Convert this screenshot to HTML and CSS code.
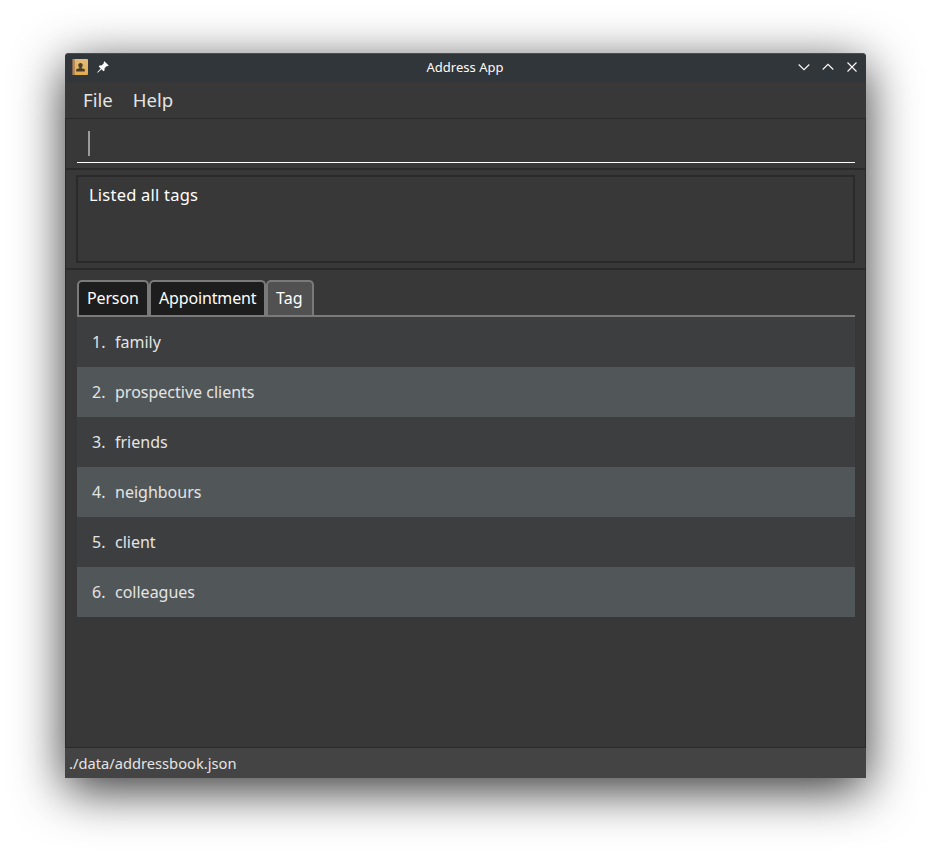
FILE: index.html
```html
<!DOCTYPE html>
<html lang="en">
<head>
<meta charset="utf-8">
<title>Address App</title>
<link rel="stylesheet" href="styles.css">
</head>
<body>
<div class="window">
  <header class="titlebar">
    <div class="title-left">
      <svg class="app-icon" width="18" height="18" viewBox="0 0 18 18">
        <defs><linearGradient id="cover" x1="0" y1="0" x2="0" y2="1"><stop offset="0" stop-color="#e2bd7c"/><stop offset="1" stop-color="#e2ab4b"/></linearGradient></defs>
        <rect x="1" y="1" width="16" height="16" rx="1" fill="url(#cover)"/>
        <rect x="1" y="1" width="1.5" height="16" fill="#81624b"/>
        <rect x="2.5" y="1" width="1.5" height="16" fill="#b48a56"/>
        <path d="M9.500 5c1.500 0 2.200 1 2.200 2.200 0 1-.5 1.600-1 2.100v1l3.100.9v2.300H5.200v-2.300l3.100-.9v-1c-.5-.5-1-1.100-1-2.100C7.300 6 8 5 9.500 5z" fill="#4b3d2c"/>
      </svg>
      <svg class="pin" width="12" height="12" viewBox="0 0 12 12">
        <path d="M7.400.3 11.700 4.500 10.700 5.300 9.800 5 7.600 7.200 7.500 9.400 6.500 10.200 4.500 8.200.7 11.700.2 11.300 3.700 7.400 1.700 5.400 2.600 4.400 4.800 4.300 7 2.100 6.600 1.200z" fill="#fcfcfc"/>
      </svg>
    </div>
    <h1 class="title">Address App</h1>
    <div class="controls">
      <svg width="12" height="12" viewBox="0 0 12 12"><path d="M.7 3.500 6 8.700l5.300-5.200"/></svg>
      <svg width="12" height="12" viewBox="0 0 12 12"><path d="M.7 8.500 6 3.300l5.300 5.200"/></svg>
      <svg width="12" height="12" viewBox="0 0 12 12"><path d="m1.500 1.500 9 9m0-9-9 9"/></svg>
    </div>
  </header>
  <nav class="menubar"><span>File</span><span>Help</span></nav>
  <main class="content">
    <section class="command"><div class="field"><span class="caret"></span></div></section>
    <section class="result"><div class="display">Listed all tags</div></section>
    <section class="panel">
      <div class="tabs">
        <div class="tab person">Person</div>
        <div class="tab appointment">Appointment</div>
        <div class="tab tag selected">Tag</div>
      </div>
      <div class="list">
        <div class="row"><span class="num">1.</span><span>family</span></div>
        <div class="row"><span class="num">2.</span><span>prospective clients</span></div>
        <div class="row"><span class="num">3.</span><span>friends</span></div>
        <div class="row"><span class="num">4.</span><span>neighbours</span></div>
        <div class="row"><span class="num">5.</span><span>client</span></div>
        <div class="row"><span class="num">6.</span><span>colleagues</span></div>
      </div>
    </section>
  </main>
  <footer class="status">./data/addressbook.json</footer>
</div>
</body>
</html>
```
FILE: styles.css
```css
* { box-sizing: border-box; }
body {
  margin: 0;
  height: 855px;
  padding: 53px 65px 77px;
  overflow: hidden;
  background: #fff;
  font-family: "Noto Sans", sans-serif;
  color: #e4e4e4;
}
.window {
  width: 801px;
  height: 725px;
  display: flex;
  flex-direction: column;
  background: #383838;
  border-radius: 4px 4px 0 0;
  box-shadow: 0 12px 50px rgba(0, 0, 0, .8);
}
.titlebar {
  height: 29px;
  display: grid;
  grid-template-columns: 1fr auto 1fr;
  align-items: center;
  padding: 0 8px 2px 6px;
  background: #31363b;
  border-top: 1px solid #4a4e52;
  border-radius: 4px 4px 0 0;
}
.title-left { display: flex; align-items: center; gap: 8px; }
.title { margin: 0; padding-left: 1px; font-size: 13px; font-weight: 400; line-height: 26px; color: #fcfcfc; }
.controls { display: flex; justify-content: flex-end; gap: 12px; }
.controls path { fill: none; stroke: #fcfcfc; stroke-width: 1.1; }
.menubar {
  height: 36px;
  display: flex;
  gap: 20px;
  padding-left: 18px;
  font-size: 18.600px;
  line-height: 36px;
}
.content {
  flex: 1;
  display: flex;
  flex-direction: column;
  border: 1px solid #2a2a2a;
}
.command { height: 51px; padding: 0 10px 0 11px; border-bottom: 2px solid #2a2a2a; }
.field { height: 44px; padding: 12px 0 0 11px; border-bottom: 1px solid #fff; }
.caret { display: block; width: 2px; height: 25px; background: #9b9b9b; }
.result { height: 100px; padding: 5px 10px; border-bottom: 2px solid #2a2a2a; }
.display {
  height: 88px;
  padding: 6px 11px;
  border: 2px solid #2a2a2a;
  font-size: 16.500px;
  letter-spacing: .22px;
  line-height: 24px;
  color: #fff;
}
.panel { flex: 1; padding: 10px 10px 0 11px; }
.tabs { height: 37px; display: flex; border-bottom: 2px solid #7a7a7a; }
.tab {
  height: 35px;
  padding-left: 8px;
  border: 2px solid #7a7a7a;
  border-bottom: 0;
  border-radius: 5px 5px 0 0;
  background: #1d1d1d;
  color: #fff;
  font-size: 16px;
  letter-spacing: -.15px;
  line-height: 33px;
  white-space: nowrap;
}
.person { width: 72px; }
.appointment { width: 117px; }
.tag { width: 48px; letter-spacing: .1px; }
.selected { background: #515151; }
.row {
  height: 50px;
  display: flex;
  padding-left: 15px;
  background: #3c3e3f;
  font-size: 16px;
  line-height: 50px;
}
.row:nth-child(even) { background: #515658; }
.num { width: 23px; }
.status {
  height: 30px;
  padding-left: 4px;
  background: #444;
  font-size: 14.700px;
  line-height: 30px;
}
```
